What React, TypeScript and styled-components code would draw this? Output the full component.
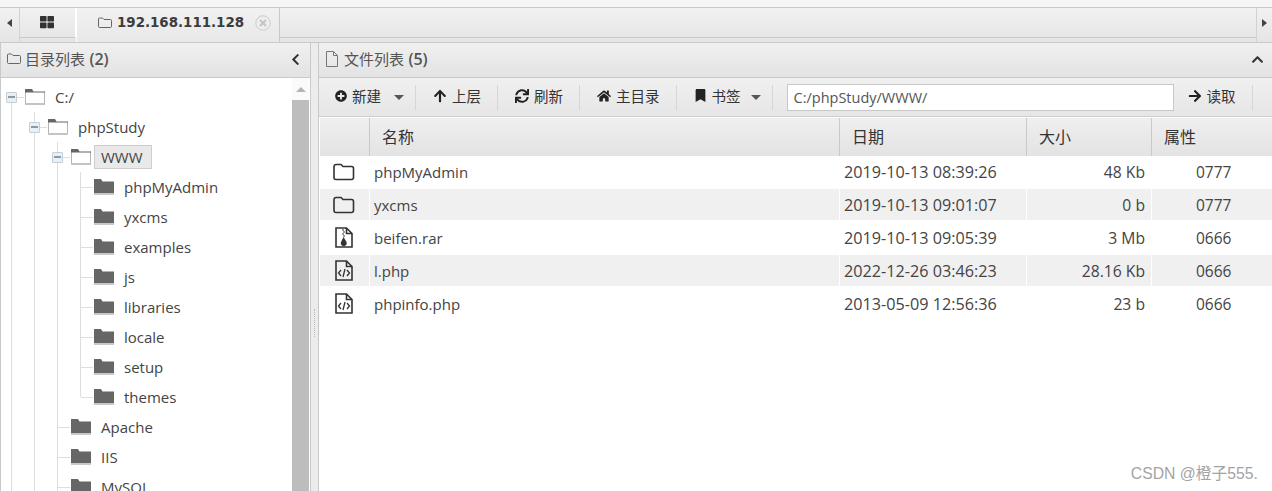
import React from 'react';
import styled, { createGlobalStyle } from 'styled-components';
import { FaPlusCircle, FaArrowUp, FaSync, FaHome, FaBookmark, FaArrowRight, FaChevronUp, FaChevronLeft, FaThLarge } from 'react-icons/fa';

const FONT = `"Open Sans", "Noto Sans CJK SC", sans-serif`;
const CJK = `"Noto Sans CJK SC", sans-serif`;

const Global = createGlobalStyle`
  html, body { margin: 0; padding: 0; background: #fff; overflow: hidden; }
  * { box-sizing: border-box; }
`;

const Page = styled.div`
  position: relative;
  width: 1272px;
  height: 491px;
  overflow: hidden;
  display: flex;
  flex-direction: column;
  font-family: ${FONT};
  color: #444;
  background: #fff;
`;
const TopStrip = styled.div`
  height: 8px;
  flex: none;
  background: #f6f6f6;
  border-bottom: 1px solid #c9c9c9;
`;
const TabBar = styled.div`
  height: 35px;
  flex: none;
  display: flex;
  background: linear-gradient(#f1f1f1, #e5e5e5);
  border-bottom: 1px solid #c9c9c9;
`;
const ScrollCell = styled.div<{ $right?: boolean }>`
  width: ${p => (p.$right ? 16 : 20)}px;
  flex: none;
  display: flex;
  align-items: center;
  justify-content: center;
  padding-bottom: 4px;
  border-right: ${p => (p.$right ? 'none' : '1px solid #d2d2d2')};
  border-left: ${p => (p.$right ? '1px solid #d2d2d2' : 'none')};
`;
const Arrow = styled.span<{ $right?: boolean }>`
  width: 0;
  height: 0;
  border-top: 4px solid transparent;
  border-bottom: 4px solid transparent;
  ${p => (p.$right ? 'border-left: 5px solid #444;' : 'border-right: 5px solid #444;')}
`;
const Tabs = styled.div`
  flex: 1;
  display: flex;
  height: 30px;
  border-bottom: 1px solid #c9c9c9;
`;
const TabFiller = styled.span`
  flex: 1;
`;
const GridTab = styled.div`
  width: 56px;
  height: 30px;
  flex: none;
  display: flex;
  align-items: center;
  justify-content: center;
  padding: 0 2px 2px 0;
  color: #333;
  font-size: 14px;
  border-right: 1px solid #fff;
  border-bottom: 1px solid #c9c9c9;
`;
const ActiveTab = styled.div`
  width: 204px;
  height: 34px;
  flex: none;
  display: flex;
  align-items: center;
  padding: 0 0 5px 21px;
  gap: 5px;
  background: linear-gradient(#f1f1f1, #e8e8e8);
  border-left: 1px solid #fff;
  border-right: 1px solid #c9c9c9;
`;
const TabTitle = styled.span`
  font-family: "DejaVu Sans", sans-serif;
  font-weight: 700;
  font-size: 13.4px;
  color: #3c3c3c;
`;
const CloseMark = styled.svg`
  margin-left: 6px;
  flex: none;
`;
const Main = styled.div`
  flex: 1;
  min-height: 0;
  display: flex;
`;
const LeftPanel = styled.section`
  width: 311px;
  flex: none;
  display: flex;
  flex-direction: column;
  border-left: 1px solid #c9c9c9;
  border-right: 1px solid #c9c9c9;
`;
const PanelHead = styled.header`
  height: 35px;
  flex: none;
  display: flex;
  align-items: center;
  gap: 4px;
  padding: 0 8px 2px 6px;
  background: linear-gradient(#f0f0f0, #e3e3e3);
  border-bottom: 1px solid #c9c9c9;
  font-family: ${CJK};
  font-size: 15px;
  color: #555;
`;
const HeadCount = styled.b`
  font-family: ${FONT};
  font-size: 16px;
  font-weight: 600;
  margin-left: 1px;
`;
const HeadAction = styled.span`
  margin-left: auto;
  display: flex;
  color: #333;
  font-size: 13px;
`;
const TreeArea = styled.div`
  flex: 1;
  min-height: 0;
  display: flex;
  overflow: hidden;
`;
const Tree = styled.div`
  flex: 1;
  padding-top: 4px;
`;
const TreeRow = styled.div`
  height: 30px;
  display: flex;
  align-items: stretch;
`;
const Guide = styled.span<{ $stop?: boolean; $branch?: boolean }>`
  position: relative;
  width: 23px;
  flex: none;
  &::before {
    content: '';
    position: absolute;
    left: 10px;
    top: 0;
    width: 1px;
    height: ${p => (p.$stop ? '15px' : '30px')};
    background: #dedede;
  }
  ${p => p.$branch && `
    &::after {
      content: '';
      position: absolute;
      left: 11px;
      top: 15px;
      width: 12px;
      height: 1px;
      background: #dedede;
    }
  `}
`;
const Switch = styled.span<{ $root?: boolean }>`
  position: relative;
  width: 23px;
  flex: none;
  &::before {
    content: '';
    position: absolute;
    left: 10px;
    top: ${p => (p.$root ? '15px' : '0')};
    bottom: 0;
    width: 1px;
    background: #dedede;
  }
  &::after {
    content: '';
    position: absolute;
    left: 11px;
    top: 15px;
    width: 12px;
    height: 1px;
    background: #dedede;
  }
`;
const SwitchBox = styled.i`
  position: absolute;
  z-index: 1;
  left: 5px;
  top: 10px;
  width: 11px;
  height: 11px;
  background: #e9eff3;
  border: 1px solid #c3cfd6;
  border-radius: 1px;
  &::after {
    content: '';
    position: absolute;
    left: 1px;
    right: 1px;
    top: 3px;
    height: 2px;
    background: #8b9ba6;
  }
`;
const TreeIcon = styled.svg`
  flex: none;
  margin: 6px 0 0 1px;
`;
const TreeLabel = styled.span<{ $selected?: boolean }>`
  align-self: center;
  margin-left: ${p => (p.$selected ? 3 : 10)}px;
  padding: ${p => (p.$selected ? '0 8px 0 6px' : '0')};
  height: ${p => (p.$selected ? 24 : 22)}px;
  line-height: 22px;
  font-size: 15px;
  color: #444;
  white-space: nowrap;
  ${p => p.$selected && 'background: #e9e9e9; border: 1px solid #cdcdcd;'}
`;
const ScrollBar = styled.div`
  width: 17px;
  flex: none;
  margin-right: 1px;
  display: flex;
  flex-direction: column;
  background: #f1f1f1;
`;
const ScrollUp = styled.div`
  height: 22px;
  flex: none;
  display: flex;
  align-items: center;
  justify-content: center;
  padding-top: 1px;
  background: #fafafa;
  &::after {
    content: '';
    border-left: 5px solid transparent;
    border-right: 5px solid transparent;
    border-bottom: 5px solid #b5b5b5;
  }
`;
const ScrollThumb = styled.div`
  flex: 1;
  background: #bdbdbd;
`;
const Splitter = styled.div`
  width: 8px;
  flex: none;
  display: flex;
  align-items: center;
  justify-content: center;
  background: #ececec;
  border-right: 1px solid #c9c9c9;
`;
const Grip = styled.span`
  width: 2px;
  height: 28px;
  margin-top: 112px;
  border-left: 1px dotted #bbb;
`;
const RightPanel = styled.section`
  flex: 1;
  min-width: 0;
  display: flex;
  flex-direction: column;
`;
const Toolbar = styled.div`
  height: 39px;
  flex: none;
  display: flex;
  align-items: center;
  background: linear-gradient(#f0f0f0, #e6e6e6);
  border-bottom: 1px solid #cfcfcf;
`;
const ToolButton = styled.div<{ $caret?: boolean; $left?: number }>`
  height: 25px;
  flex: none;
  display: flex;
  align-items: center;
  gap: 5px;
  padding: 0 ${p => (p.$caret ? 11 : 16)}px 3px ${p => p.$left ?? 17}px;
  border-right: 1px solid #cfd8de;
  font-family: ${CJK};
  font-size: 14.5px;
  color: #333;
  svg { flex: none; color: #222; }
`;
const Caret = styled.span<{ $gap: number }>`
  margin: 3px 0 0 ${p => p.$gap}px;
  border-left: 5px solid transparent;
  border-right: 5px solid transparent;
  border-top: 5px solid #555;
`;
const PathInput = styled.div`
  width: 387px;
  height: 27px;
  flex: none;
  margin-left: 14px;
  padding-left: 6px;
  line-height: 25px;
  background: #fff;
  border: 1px solid #c8c8c8;
  font-size: 14.5px;
  color: #555;
`;
const Grid = styled.div`
  display: grid;
  grid-template-columns: 49px 470px 187px 125px 1fr;
  margin: 1px 0 0 1px;
  font-size: 15px;
`;
const Head = styled.div<{ $first?: boolean }>`
  height: 38px;
  line-height: 37px;
  padding-left: 12px;
  background: linear-gradient(#efefef, #e3e3e3);
  border-left: ${p => (p.$first ? 'none' : '1px solid #c9c9c9')};
  font-family: ${CJK};
  font-size: 16px;
  color: #333;
`;
const Cell = styled.div<{ $shade?: boolean; $align?: string; $pad?: string; $first?: boolean; $size?: number }>`
  height: 31px;
  margin-bottom: 2px;
  margin-left: ${p => (p.$first ? 0 : 1)}px;
  display: flex;
  align-items: center;
  justify-content: ${p => p.$align || 'flex-start'};
  padding: ${p => p.$pad || '0 0 0 4px'};
  background: ${p => (p.$shade ? '#f0f0f0' : '#fff')};
  color: #444;
  font-size: ${p => p.$size ?? 15}px;
  white-space: nowrap;
`;
const Watermark = styled.div`
  position: absolute;
  right: 14px;
  bottom: 7px;
  font-family: "Liberation Sans", "Noto Sans CJK SC", sans-serif;
  font-size: 15.75px;
  color: #a3a3a3;
`;

const FolderOpen = () => (
  <TreeIcon width="20" height="18" viewBox="0 0 20 18">
    <path d="M0 0.5 h8 l1 2.5 h11 V16 H0z" fill="#fff" />
    <path d="M0.5 3.5 V15.5 H19.5 V3.5" fill="none" stroke="#b5b5b5" />
    <path d="M0 1 h7 l1.5 2.5 H20 V4.5 H0z" fill="#666" />
    <rect y="15" width="20" height="2" fill="#c4c4c4" />
  </TreeIcon>
);
const FolderClosed = () => (
  <TreeIcon width="20" height="18" viewBox="0 0 20 18">
    <path d="M0 1 h7 l1.5 2.5 H20 V15 H0z" fill="#666" />
    <rect y="15" width="20" height="2" fill="#c9c9c9" />
  </TreeIcon>
);
const SmallFolder = () => (
  <svg width="14" height="12" viewBox="0 0 14 12" style={{ flex: 'none' }}>
    <path d="M.5 2 a1 1 0 0 1 1-1 h3 l1.5 1.5 h6.5 a1 1 0 0 1 1 1 v6 a1 1 0 0 1-1 1 h-11 a1 1 0 0 1-1-1z" fill="none" stroke="#666" />
  </svg>
);
const SmallFile = () => (
  <svg width="15" height="16" viewBox="0 0 15 16" style={{ flex: 'none' }}>
    <path d="M1.5.5 h7 l4 4 v11 h-11z M8.5.5 v4 h4" fill="none" stroke="#777" />
  </svg>
);
const RowFolder = () => (
  <svg width="22" height="18" viewBox="0 0 22 18">
    <path d="M1 3.5 a2 2 0 0 1 2-2 h5 l2 2 h8.5 a2 2 0 0 1 2 2 v9 a2 2 0 0 1-2 2 H3 a2 2 0 0 1-2-2z" fill="none" stroke="#333" strokeWidth="1.6" />
  </svg>
);
const FileOutline = () => <path d="M1 1 h10.5 l5.5 5.5 V20 H1z M11.5 1 v5.5 H17" fill="none" stroke="#333" strokeWidth="1.6" />;
const ZipFile = () => (
  <svg width="20" height="21" viewBox="-2 0 20 21">
    <FileOutline />
    <path d="M7 3h2M8 5h2M7 7h2M8 9h2" stroke="#333" strokeWidth="1" />
    <path d="M8.5 10 L6 15 a3 3 0 1 0 5.5 0z" fill="#333" />
  </svg>
);
const CodeFile = () => (
  <svg width="20" height="21" viewBox="-2 0 20 21">
    <FileOutline />
    <path d="M6 10 L3.5 13 L6 16 M12 10 L14.5 13 L12 16 M10 9 L8 17" fill="none" stroke="#333" strokeWidth="1.3" />
  </svg>
);

const leaves = ['phpMyAdmin', 'yxcms', 'examples', 'js', 'libraries', 'locale', 'setup', 'themes'];
const files = [
  { name: 'phpMyAdmin', date: '2019-10-13 08:39:26', size: '48 Kb', attr: '0777', icon: <RowFolder /> },
  { name: 'yxcms', date: '2019-10-13 09:01:07', size: '0 b', attr: '0777', icon: <RowFolder /> },
  { name: 'beifen.rar', date: '2019-10-13 09:05:39', size: '3 Mb', attr: '0666', icon: <ZipFile /> },
  { name: 'l.php', date: '2022-12-26 03:46:23', size: '28.16 Kb', attr: '0666', icon: <CodeFile /> },
  { name: 'phpinfo.php', date: '2013-05-09 12:56:36', size: '23 b', attr: '0666', icon: <CodeFile /> },
];

export default function App() {
  return (
    <Page>
      <Global />
      <TopStrip />
      <TabBar>
        <ScrollCell><Arrow /></ScrollCell>
        <Tabs>
          <GridTab><FaThLarge /></GridTab>
          <ActiveTab>
            <SmallFolder />
            <TabTitle>192.168.111.128</TabTitle>
            <CloseMark width="16" height="16" viewBox="0 0 16 16">
              <circle cx="8" cy="8" r="7.2" fill="#eee" stroke="#ccc" />
              <path d="M5 5 L11 11 M11 5 L5 11" stroke="#c4c4c4" strokeWidth="2" />
            </CloseMark>
          </ActiveTab>
          <TabFiller />
        </Tabs>
        <ScrollCell $right><Arrow $right /></ScrollCell>
      </TabBar>
      <Main>
        <LeftPanel>
          <PanelHead>
            <SmallFolder />
            <span>目录列表 <HeadCount>(2)</HeadCount></span>
            <HeadAction><FaChevronLeft /></HeadAction>
          </PanelHead>
          <TreeArea>
            <Tree>
              <TreeRow>
                <Switch $root><SwitchBox /></Switch>
                <FolderOpen />
                <TreeLabel>C:/</TreeLabel>
              </TreeRow>
              <TreeRow>
                <Guide />
                <Switch><SwitchBox /></Switch>
                <FolderOpen />
                <TreeLabel>phpStudy</TreeLabel>
              </TreeRow>
              <TreeRow>
                <Guide /><Guide />
                <Switch><SwitchBox /></Switch>
                <FolderOpen />
                <TreeLabel $selected>WWW</TreeLabel>
              </TreeRow>
              {leaves.map((n, i) => (
                <TreeRow key={n}>
                  <Guide /><Guide /><Guide />
                  <Guide $branch $stop={i === leaves.length - 1} />
                  <FolderClosed />
                  <TreeLabel>{n}</TreeLabel>
                </TreeRow>
              ))}
              {['Apache', 'IIS', 'MySQL'].map(n => (
                <TreeRow key={n}>
                  <Guide /><Guide />
                  <Guide $branch />
                  <FolderClosed />
                  <TreeLabel>{n}</TreeLabel>
                </TreeRow>
              ))}
            </Tree>
            <ScrollBar>
              <ScrollUp />
              <ScrollThumb />
            </ScrollBar>
          </TreeArea>
        </LeftPanel>
        <Splitter><Grip /></Splitter>
        <RightPanel>
          <PanelHead>
            <SmallFile />
            <span>文件列表 <HeadCount>(5)</HeadCount></span>
            <HeadAction><FaChevronUp /></HeadAction>
          </PanelHead>
          <Toolbar>
            <ToolButton $caret $left={16}><FaPlusCircle size={12} /><span>新建</span><Caret $gap={8} /></ToolButton>
            <ToolButton><FaArrowUp size={14} /><span>上层</span></ToolButton>
            <ToolButton><FaSync size={14} /><span>刷新</span></ToolButton>
            <ToolButton><FaHome size={14} /><span>主目录</span></ToolButton>
            <ToolButton $caret><FaBookmark size={13} /><span>书签</span><Caret $gap={5} /></ToolButton>
            <PathInput>C:/phpStudy/WWW/</PathInput>
            <ToolButton $left={14}><FaArrowRight size={14} /><span>读取</span></ToolButton>
          </Toolbar>
          <Grid>
            <Head $first />
            <Head>名称</Head>
            <Head>日期</Head>
            <Head>大小</Head>
            <Head>属性</Head>
            {files.map((f, i) => {
              const shade = i % 2 === 1;
              return (
                <React.Fragment key={f.name}>
                  <Cell $first $shade={shade} $pad="0 0 0 13px">{f.icon}</Cell>
                  <Cell $shade={shade}>{f.name}</Cell>
                  <Cell $shade={shade} $size={16.2}>{f.date}</Cell>
                  <Cell $shade={shade} $align="flex-end" $pad="0 6px 0 0" $size={15.7}>{f.size}</Cell>
                  <Cell $shade={shade} $pad="0 0 0 44px" $size={15.5}>{f.attr}</Cell>
                </React.Fragment>
              );
            })}
          </Grid>
        </RightPanel>
      </Main>
      <Watermark>CSDN @橙子555.</Watermark>
    </Page>
  );
}
